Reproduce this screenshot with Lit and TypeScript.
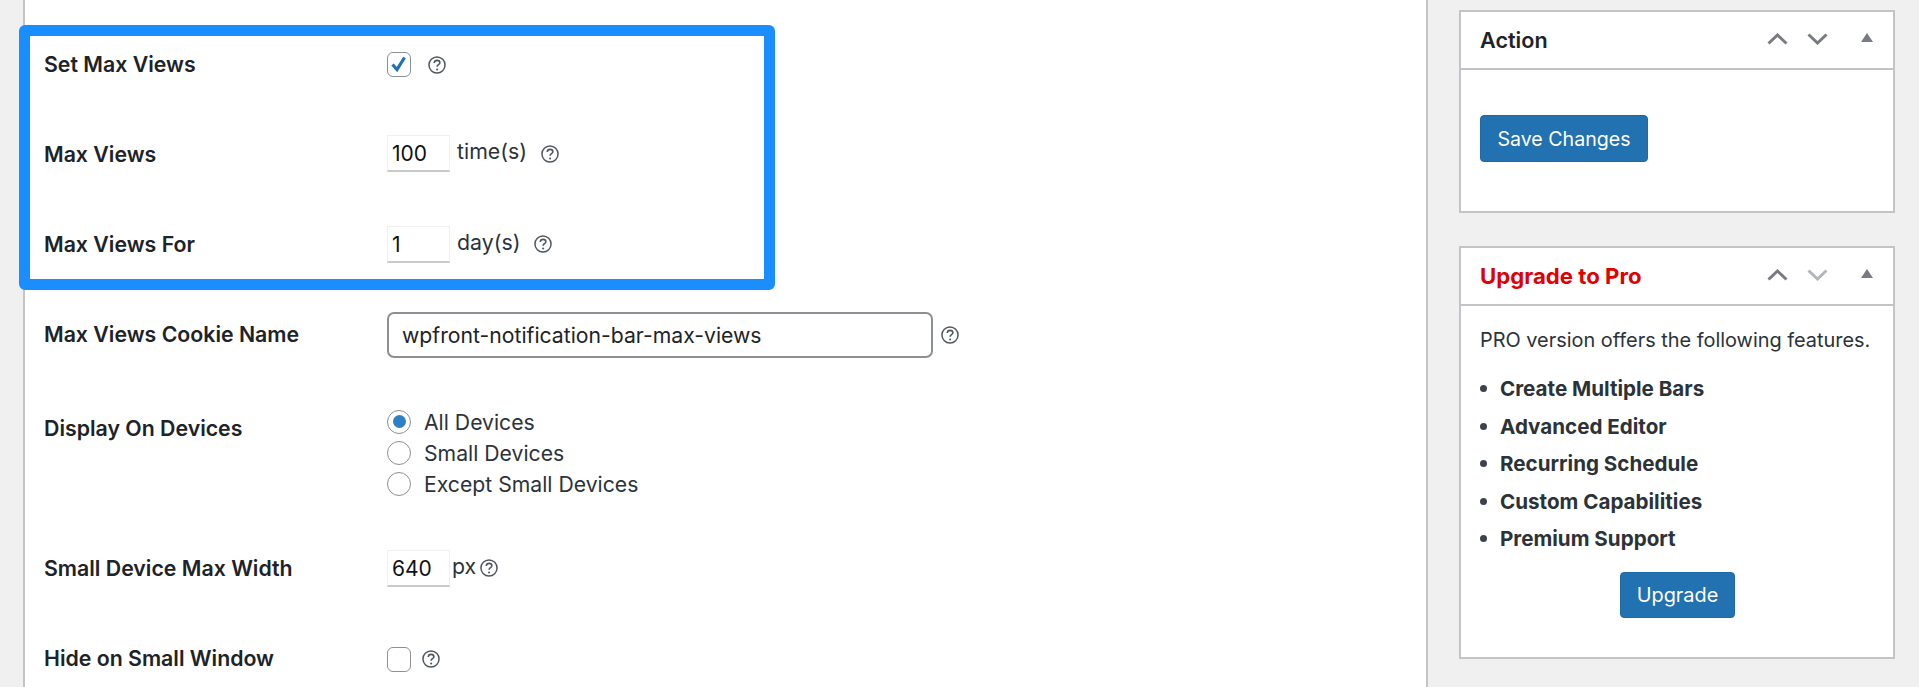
import { LitElement, html, css, svg } from "lit";
import { customElement } from "lit/decorators.js";

const help = html`<svg class="help" viewBox="0 0 17 17" fill="none" stroke="#50575e"><circle cx="8.5" cy="8.5" r="7.6" stroke-width="1.4"/><path d="M5.9 6.6c.1-1.6 1.2-2.5 2.7-2.5 1.5 0 2.6.9 2.6 2.2 0 1.9-2.6 1.9-2.6 3.9" stroke-width="1.5"/><circle cx="8.6" cy="12.7" r="1" fill="#50575e" stroke="none"/></svg>`;

const up = svg`<path d="M1.5 10.5 10.5 2l9 8.5" fill="none" stroke-width="3"/>`;
const down = svg`<path d="M1.5 1.5 10.5 10l9-8.5" fill="none" stroke-width="3"/>`;

function controls(faded: boolean) {
  return html`<div class="ctrls">
    <svg class="chev" viewBox="0 0 21 12" stroke="#787c82">${up}</svg>
    <svg class="chev" viewBox="0 0 21 12" stroke=${faded ? "#b4b7ba" : "#787c82"}>${down}</svg>
    <svg class="tri" viewBox="0 0 12 9" fill="#787c82"><path d="M6 0l6 9H0z"/></svg>
  </div>`;
}

@customElement("app-root")
export class AppRoot extends LitElement {
  static styles = css`
    :host {
      display: flex;
      width: 1919px;
      height: 687px;
      overflow: hidden;
      background: #f0f0f1;
      font-family: Inter, "Liberation Sans", sans-serif;
      color: #2c3338;
    }
    .main {
      box-sizing: border-box;
      flex: none;
      width: 1405px;
      height: 687px;
      margin-left: 23px;
      padding-top: 25px;
      background: #fff;
      border-left: 2px solid #c3c4c7;
      border-right: 2px solid #c3c4c7;
      margin-right: 1px;
    }
    .hl {
      box-sizing: border-box;
      width: 756px;
      height: 265px;
      margin-left: -6px;
      margin-bottom: 17px;
      border: 11px solid #1b8eff;
      border-radius: 6px;
      background: #fff;
      padding-left: 14px;
      display: flex;
      flex-direction: column;
      gap: 34.5px;
    }
    .rows {
      display: flex;
      flex-direction: column;
      gap: 34px;
      padding-left: 19px;
    }
    .row {
      display: grid;
      grid-template-columns: 343px 1fr;
      align-items: center;
      height: 56px;
      flex: none;
    }
    .row.tall {
      height: 110px;
      align-items: start;
    }
    .label {
      font-size: 21.3px;
      font-weight: 600;
      line-height: 24px;
      color: #1d2327;
      margin-top: -1px;
    }
    .rows .label {
      margin-top: -3px;
    }
    .hl .row:last-child .label {
      margin-top: -3px;
    }
    .rows .row.tall .label {
      margin-top: 18.5px;
    }
    .ctl {
      display: flex;
      align-items: center;
    }
    .gap17 { width: 17px; }
    .gap14 { width: 14px; }
    .gap11 { width: 11px; }
    .gap8 { width: 8px; }
    .gap4 { width: 4px; }
    .help {
      width: 18px;
      height: 18px;
      flex: none;
      display: block;
    }
    .num ~ .help {
      margin-top: -2px;
    }
    .box.on ~ .help {
      margin-top: 2px;
    }
    .box {
      box-sizing: border-box;
      flex: none;
      display: block;
      width: 24px;
      height: 25px;
      border: 1.5px solid #8c8f94;
      border-radius: 6px;
      background: #fff;
    }
    .box svg {
      display: block;
      width: 21px;
      height: 22px;
    }
    .num {
      box-sizing: border-box;
      width: 63px;
      height: 37px;
      padding: 1px 0 0 4px;
      margin-top: -2px;
      border: 1px solid #f0f0f1;
      border-bottom: 2px solid #c8cacc;
      background: #fff;
      font: 400 21px Inter, "Liberation Sans", sans-serif;
      color: #111;
      outline: none;
    }
    .unit {
      font-size: 21.3px;
      line-height: 24px;
      margin-left: 7px;
      margin-top: -7px;
    }
    .unit.tight {
      margin-left: 2px;
    }
    .text {
      box-sizing: border-box;
      width: 546px;
      height: 46px;
      padding: 0 13px;
      border: 2px solid #8c8f94;
      border-radius: 7px;
      background: #fff;
      font: 400 21.2px Inter, "Liberation Sans", sans-serif;
      color: #1d2327;
      outline: none;
    }
    .radios {
      display: flex;
      flex-direction: column;
      margin-top: 9px;
    }
    .radio {
      display: flex;
      align-items: center;
      gap: 13px;
      height: 31px;
      font-size: 21.2px;
    }
    .dot {
      box-sizing: border-box;
      width: 24px;
      height: 24px;
      flex: none;
      border: 1.5px solid #8c8f94;
      border-radius: 50%;
      display: flex;
      align-items: center;
      justify-content: center;
      background: #fff;
    }
    .dot i {
      display: block;
      width: 13px;
      height: 13px;
      border-radius: 50%;
      background: #2f7fc4;
    }
    .side {
      flex: none;
      width: 436px;
      margin-left: 30px;
      padding-top: 10px;
      display: flex;
      flex-direction: column;
      gap: 33px;
    }
    .card {
      box-sizing: border-box;
      background: #fff;
      border: 2px solid #c3c4c7;
    }
    .card.a {
      height: 203px;
    }
    .card.b {
      height: 413px;
    }
    .head {
      box-sizing: border-box;
      height: 58px;
      display: flex;
      align-items: center;
      justify-content: space-between;
      padding: 0 20px 2px 19px;
      border-bottom: 2px solid #c3c4c7;
      font-size: 21.6px;
      font-weight: 600;
      color: #1d2327;
    }
    .head.red {
      color: #e00000;
      font-weight: 700;
      font-size: 22.2px;
    }
    .title {
      margin-top: 2px;
    }
    .red .title {
      margin-top: 0;
    }
    .ctrls {
      display: flex;
      align-items: flex-start;
    }
    .chev {
      width: 21px;
      height: 12px;
      margin-right: 19px;
      display: block;
    }
    .tri {
      width: 12px;
      height: 9px;
      margin-left: 14px;
      display: block;
    }
    .btn {
      box-sizing: border-box;
      display: flex;
      align-items: center;
      justify-content: center;
      background: #2271b1;
      border: 1px solid #1f6aa6;
      border-radius: 4px;
      color: #fff;
      font-size: 19.6px;
      height: 47px;
    }
    .a .body {
      padding: 45px 0 0 19px;
    }
    .a .btn {
      width: 168px;
    }
    .b .body {
      padding: 20px 0 0 19px;
      font-size: 19.9px;
    }
    .b p {
      margin: 0;
      line-height: 28px;
    }
    ul {
      list-style: none;
      margin: 16px 0 0;
      padding: 0;
      font-weight: 700;
      font-size: 20.6px;
      color: #2c3338;
    }
    li {
      height: 37.5px;
      display: flex;
      align-items: center;
      gap: 13px;
    }
    li::before {
      content: "";
      width: 7px;
      height: 7px;
      border-radius: 50%;
      background: #3c434a;
      flex: none;
    }
    .b .btn {
      width: 115px;
      height: 46px;
      margin: 14px 0 0 140px;
      font-size: 19.9px;
    }
  `;

  private row(label: string, ctl: unknown) {
    return html`<div class="row"><div class="label">${label}</div><div class="ctl">${ctl}</div></div>`;
  }

  render() {
    return html`
      <div class="main">
        <div class="hl">
          ${this.row("Set Max Views", html`<span class="box on"><svg viewBox="0 0 21 22"><path d="M4.5 11.5 9 16.5 16.5 4.5" fill="none" stroke="#2271b1" stroke-width="3.2"/></svg></span><span class="gap17"></span>${help}`)}
          ${this.row("Max Views", html`<input class="num" value="100" /><span class="unit">time(s)</span><span class="gap14"></span>${help}`)}
          ${this.row("Max Views For", html`<input class="num" value="1" /><span class="unit">day(s)</span><span class="gap14"></span>${help}`)}
        </div>
        <div class="rows">
          ${this.row("Max Views Cookie Name", html`<input class="text" value="wpfront-notification-bar-max-views" /><span class="gap8"></span>${help}`)}
          <div class="row tall">
            <div class="label">Display On Devices</div>
            <div class="radios">
              <div class="radio"><span class="dot"><i></i></span>All Devices</div>
              <div class="radio"><span class="dot"></span>Small Devices</div>
              <div class="radio"><span class="dot"></span>Except Small Devices</div>
            </div>
          </div>
          ${this.row("Small Device Max Width", html`<input class="num" value="640" /><span class="unit tight">px</span><span class="gap4"></span>${help}`)}
          ${this.row("Hide on Small Window", html`<span class="box"></span><span class="gap11"></span>${help}`)}
        </div>
      </div>
      <div class="side">
        <div class="card a">
          <div class="head"><span class="title">Action</span> ${controls(false)}</div>
          <div class="body"><div class="btn">Save Changes</div></div>
        </div>
        <div class="card b">
          <div class="head red"><span class="title">Upgrade to Pro</span> ${controls(true)}</div>
          <div class="body">
            <p>PRO version offers the following features.</p>
            <ul>
              <li>Create Multiple Bars</li>
              <li>Advanced Editor</li>
              <li>Recurring Schedule</li>
              <li>Custom Capabilities</li>
              <li>Premium Support</li>
            </ul>
            <div class="btn">Upgrade</div>
          </div>
        </div>
      </div>
    `;
  }
}
